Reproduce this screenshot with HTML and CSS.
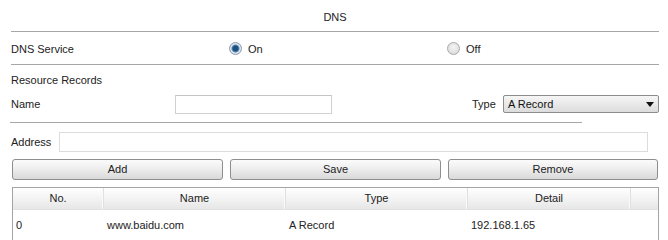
FILE: index.html
```html
<!DOCTYPE html>
<html>
<head>
<meta charset="utf-8">
<link rel="stylesheet" href="styles.css">
</head>
<body>
<div class="page">
  <div class="title">DNS</div>
  <div class="service">
    <span class="label">DNS Service</span>
    <label class="radio"><span class="dot on"></span>On</label>
    <label class="radio"><span class="dot"></span>Off</label>
  </div>
  <div class="section">Resource Records</div>
  <div class="name-row">
    <span class="label name-label">Name</span>
    <span class="input name-input"></span>
    <span class="type-label">Type</span>
    <span class="select">A Record<span class="arrow"></span></span>
  </div>
  <div class="divider"></div>
  <div class="addr-row">
    <span class="label addr-label">Address</span>
    <span class="input addr-input"></span>
  </div>
  <div class="buttons">
    <span class="btn">Add</span>
    <span class="btn">Save</span>
    <span class="btn">Remove</span>
  </div>
  <div class="table">
    <div class="thead">
      <span class="c1">No.</span>
      <span class="c2">Name</span>
      <span class="c3">Type</span>
      <span class="c4">Detail</span>
      <span class="c5"></span>
    </div>
    <div class="trow">
      <span class="c1">0</span>
      <span class="c2">www.baidu.com</span>
      <span class="c3">A Record</span>
      <span class="c4">192.168.1.65</span>
      <span class="c5"></span>
    </div>
  </div>
</div>
</body>
</html>
```

FILE: styles.css
```css
html, body {
  margin: 0;
  padding: 0;
  background: #fff;
}
body {
  font-family: "Liberation Sans", Arial, sans-serif;
  font-size: 11px;
  color: #222;
  width: 668px;
  height: 240px;
  overflow: hidden;
}
.page {
  display: flex;
  flex-direction: column;
}
.title {
  height: 31px;
  line-height: 34px;
  text-align: center;
  margin: 0 9px 0 11px;
  border-bottom: 1px solid #a6a6a6;
}
.service {
  display: grid;
  grid-template-columns: 218px 218px 1fr;
  align-items: center;
  height: 31px;
  padding-top: 1px;
  margin: 0 9px 0 11px;
  border-bottom: 1px solid #a6a6a6;
}
.radio {
  display: flex;
  align-items: center;
  gap: 6px;
}
.dot {
  width: 11px;
  height: 11px;
  border-radius: 50%;
  border: 1px solid #a9a9a9;
  background: radial-gradient(circle at 50% 40%, #f4f4f4, #d6d6d6);
  box-sizing: content-box;
}
.dot.on {
  border-color: #8a9bb0;
  background: radial-gradient(circle, #1e4e7a 0 2.5px, #5d8fbf 3.5px, #dfe6ee 4.5px, #c8d2dc);
}
.section {
  height: 27px;
  line-height: 30px;
  padding-left: 11px;
}
.name-row {
  display: flex;
  align-items: center;
  height: 20px;
  margin-top: 2px;
}
.name-label {
  width: 164px;
  padding-left: 11px;
}
.input {
  display: block;
  height: 17px;
  border: 1px solid #d2d2d2;
  border-top-color: #c4c4c4;
  background: #fff;
}
.name-input {
  width: 155px;
}
.type-label {
  margin-left: 140px;
  width: 31px;
}
.select {
  position: relative;
  width: 150px;
  height: 16px;
  line-height: 16px;
  padding-left: 4px;
  border: 1px solid #8c8c8c;
  border-radius: 2px;
  background: linear-gradient(#f6f6f6, #dcdcdc);
  color: #111;
  font-size: 11px;
  margin-top: -1px;
}
.arrow {
  position: absolute;
  right: 4px;
  top: 6px;
  width: 0;
  height: 0;
  border-left: 4px solid transparent;
  border-right: 4px solid transparent;
  border-top: 5px solid #111;
}
.divider {
  margin: 8px 0 0 10px;
  width: 572px;
  height: 1px;
  background: #a6a6a6;
}
.addr-row {
  display: flex;
  align-items: center;
  margin-top: 9px;
  height: 20px;
}
.addr-label {
  width: 48px;
  padding-left: 11px;
}
.addr-input {
  width: 587px;
  height: 18px;
  border-color: #dcdcdc;
}
.buttons {
  display: grid;
  grid-template-columns: 211px 211px 210px;
  column-gap: 7px;
  margin: 7px 0 0 12px;
}
.btn {
  display: block;
  height: 19px;
  line-height: 19px;
  text-align: center;
  border: 1px solid #8e8e8e;
  border-radius: 3px;
  background: linear-gradient(#fbfbfb 0%, #eeeeee 45%, #d9d9d9 100%);
  color: #222;
}
.table {
  margin: 7px 0 0 12px;
  width: 645px;
  height: 60px;
  border: 1px solid #a4a4a4;
  border-bottom: none;
}
.thead, .trow {
  display: grid;
  grid-template-columns: 91px 182px 182px 163px 1fr;
}
.thead {
  height: 21px;
  line-height: 21px;
  background: linear-gradient(#ffffff, #f1f1f1 60%, #e6e6e6);
  border-bottom: 1px solid #e2e2e2;
}
.thead span {
  text-align: center;
  border-right: 1px solid #e0e0e0;
  box-shadow: inset -1px 0 0 #fafafa;
}
.thead span:last-child {
  border-right: none;
  box-shadow: none;
}
.trow {
  height: 31px;
  line-height: 31px;
}
.trow span {
  padding-left: 3px;
}
```
